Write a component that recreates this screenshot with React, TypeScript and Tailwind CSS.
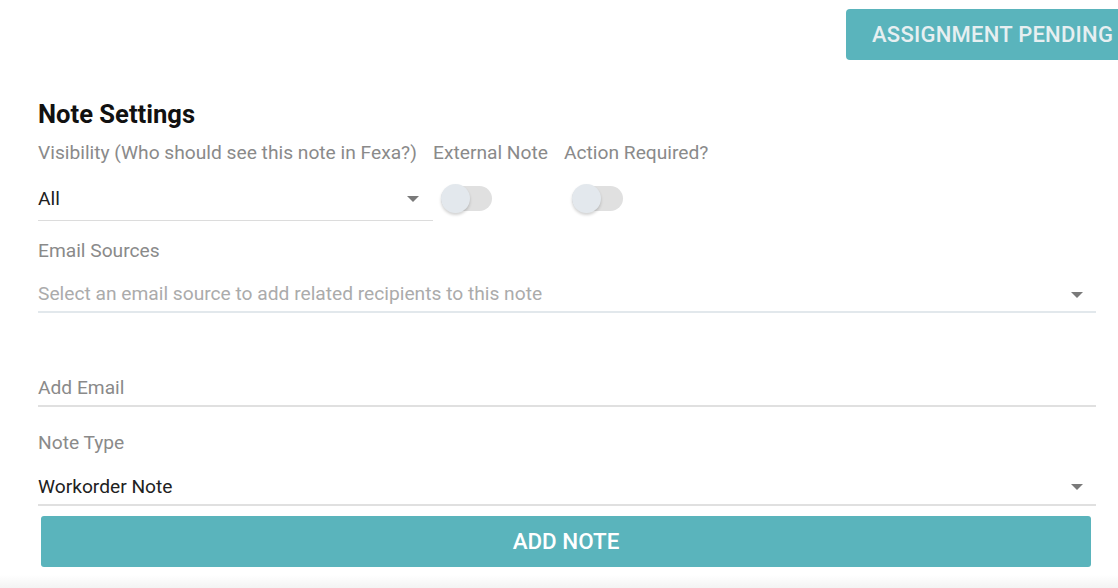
import React from "react";

const Arrow = () => (
  <svg width="12" height="6" viewBox="0 0 12 6" className="shrink-0">
    <path d="M0 0 L12 0 L6 6 Z" fill="#7a7a7a" />
  </svg>
);

const Toggle = () => (
  <div className="relative w-[51px] h-[29px] flex items-center">
    <div className="w-[51px] h-[25px] rounded-full bg-[#e0e0e0]" />
    <div className="absolute left-0 top-0 w-[29px] h-[29px] rounded-full bg-[#e3e8ed] shadow-[0_2px_3px_rgba(0,0,0,0.18)]" />
  </div>
);

export default function App() {
  return (
    <div
      className="w-[1118px] h-[588px] overflow-hidden bg-white flex flex-col"
      style={{ fontFamily: "Roboto, 'Liberation Sans', sans-serif" }}
    >
      <div className="h-[60px] pt-[9px] flex justify-end">
        <div className="h-[51px] w-[300px] mr-[-28px] shrink-0 rounded-[4px] bg-[#5ab4bc] flex items-center pl-[26px] text-[22px] font-medium tracking-[0.25px] text-[#e7eff1]">
          ASSIGNMENT PENDING
        </div>
      </div>

      <div className="pl-[38px] pr-[22px] flex flex-col">
        <div className="mt-[39px] h-[30px] leading-[30px] text-[25.6px] font-bold text-[#111]">
          Note Settings
        </div>

        <div className="mt-[12px] flex h-[24px] leading-[24px] text-[19.2px] text-[#8a8a8a]">
          <div className="w-[395px]">Visibility (Who should see this note in Fexa?)</div>
          <div className="w-[131px]">External Note</div>
          <div>Action Required?</div>
        </div>

        <div className="mt-[10px] flex">
          <div className="w-[395px] h-[46px] pt-[3px] border-b border-[#dcdcdc] flex items-center justify-between pr-[14px] text-[19.2px] text-[#212121]">
            <span>All</span>
            <Arrow />
          </div>
          <div className="w-[131px] pl-[8px] pt-[9px]">
            <Toggle />
          </div>
          <div className="pl-[8px] pt-[9px]">
            <Toggle />
          </div>
        </div>

        <div className="mt-[18px] h-[24px] leading-[24px] text-[19.2px] text-[#8a8a8a]">
          Email Sources
        </div>
        <div className="mt-[12px] h-[38px] pt-[3px] border-b-2 border-[#e2e8ec] flex items-center justify-between pr-[13px] text-[19.2px] text-[#ababab]">
          <span>Select an email source to add related recipients to this note</span>
          <Arrow />
        </div>

        <div className="mt-[56px] h-[38px] pt-[2px] border-b-2 border-[#e0e0e0] flex items-center text-[19.2px] text-[#8a8a8a]">
          Add Email
        </div>

        <div className="mt-[24px] h-[24px] leading-[24px] text-[19.2px] text-[#8a8a8a]">
          Note Type
        </div>
        <div className="mt-[13px] h-[38px] pt-[2px] border-b-2 border-[#e0e0e0] flex items-center justify-between pr-[13px] text-[19.2px] text-[#212121]">
          <span>Workorder Note</span>
          <Arrow />
        </div>

        <div className="mt-[10px] ml-[3px] mr-[5px] h-[51px] rounded-[3px] bg-[#5ab4bc] flex items-center justify-center text-[22.4px] font-medium text-white">
          ADD NOTE
        </div>
      </div>

      <div className="mt-[8px] flex-1 bg-gradient-to-b from-white to-[#f3f3f3]" />
    </div>
  );
}
